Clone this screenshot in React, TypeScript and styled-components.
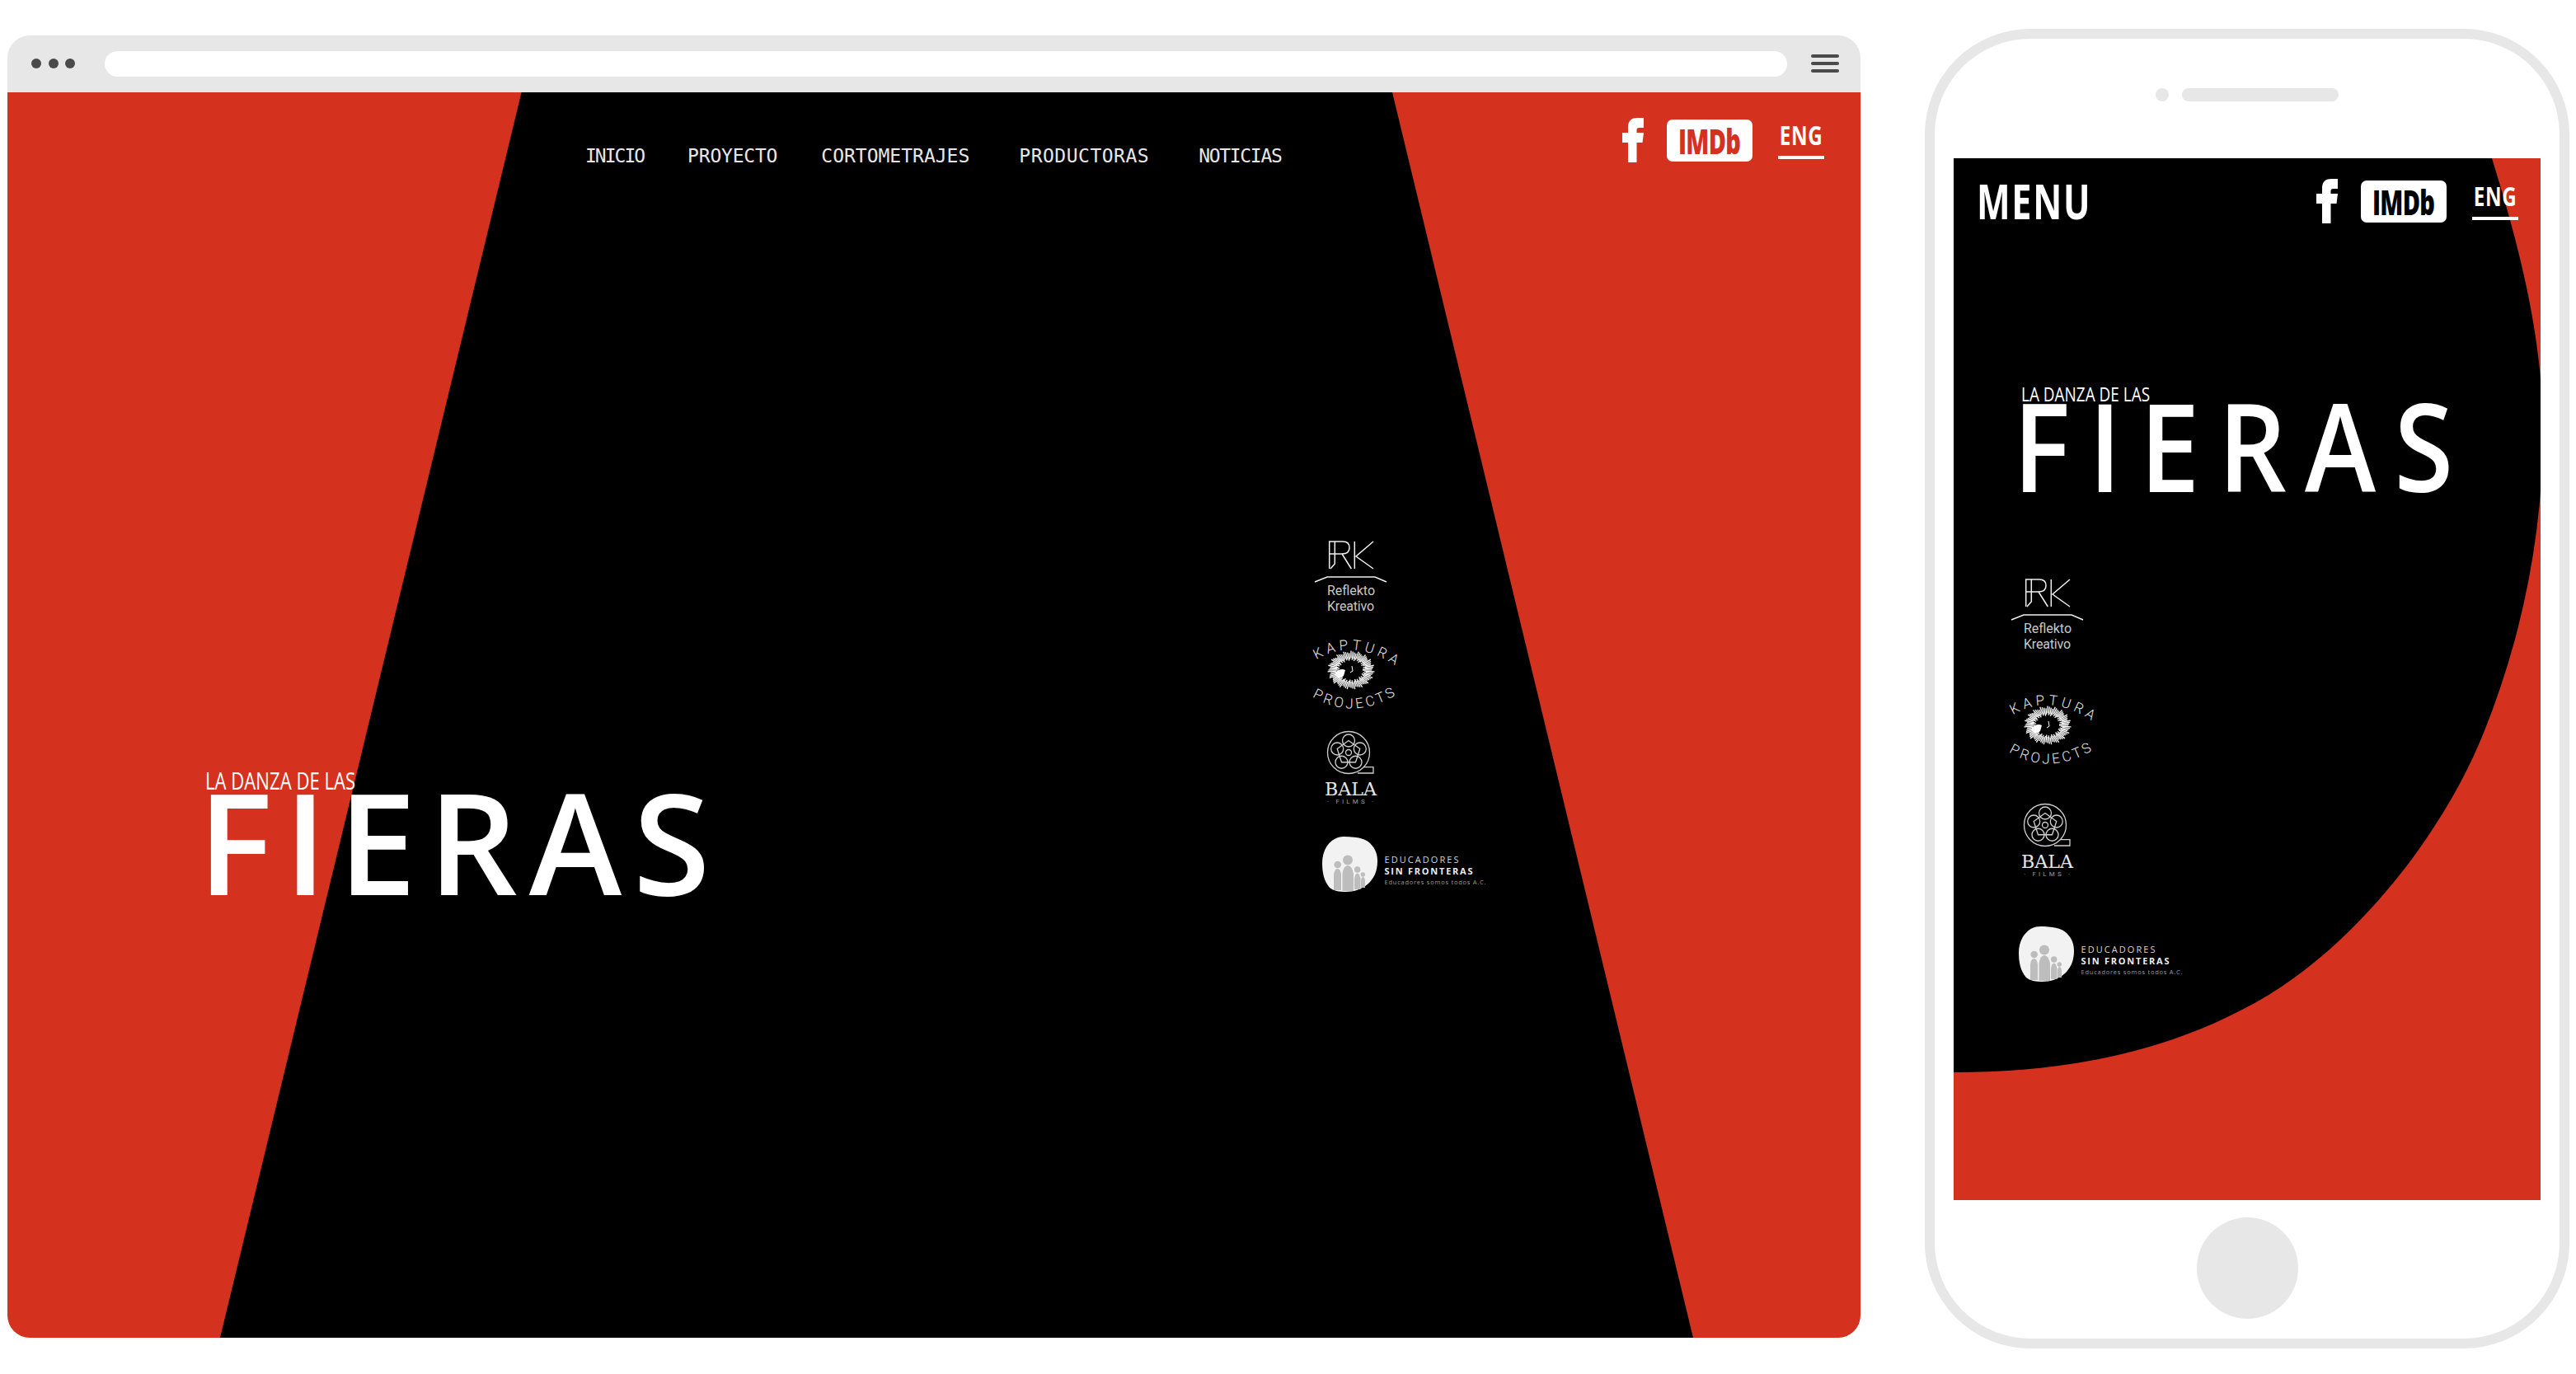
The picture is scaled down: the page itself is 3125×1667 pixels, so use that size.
import React from 'react';
import styled, { createGlobalStyle } from 'styled-components';

const RED = '#d4321f';
const CHROME = '#e7e7e7';
const DARK = '#4a4a4a';
const SANS = '"Open Sans", "Noto Sans", sans-serif';

const Global = createGlobalStyle`
  html, body { margin: 0; padding: 0; background: #fff; }
  body { width: 3125px; height: 1667px; overflow: hidden; font-family: ${SANS}; }
`;

const Stage = styled.div`
  display: flex;
  align-items: flex-start;
  gap: 78px;
  padding: 35px 0 0 9px;
`;

const BrowserFrame = styled.section`
  width: 2248px;
  height: 1580px;
  margin-top: 8px;
  border-radius: 27px;
  overflow: hidden;
  display: flex;
  flex-direction: column;
  flex: none;
`;

const Toolbar = styled.header`
  height: 69px;
  flex: none;
  background: ${CHROME};
  display: flex;
  align-items: center;
  padding: 0 26px 1px 29px;
  box-sizing: border-box;
`;

const Dots = styled.div`
  display: flex;
  gap: 8.5px;
  margin-right: 36px;
`;

const Dot = styled.span`
  width: 12px;
  height: 12px;
  border-radius: 50%;
  background: ${DARK};
`;

const UrlBar = styled.div`
  flex: 1;
  height: 31px;
  border-radius: 16px;
  background: #fff;
`;

const Burger = styled.div`
  width: 34px;
  margin-left: 29px;
  display: flex;
  flex-direction: column;
  gap: 5px;
`;

const BurgerLine = styled.span`
  height: 4px;
  border-radius: 2px;
  background: ${DARK};
`;

const Hero = styled.main`
  flex: 1;
  position: relative;
  background: ${RED};
  display: flex;
  flex-direction: column;
  &::before {
    content: '';
    position: absolute;
    inset: 0;
    background: #000;
    clip-path: polygon(623.6px 0, 1680px 0, 2045px 100%, 258px 100%);
  }
`;

const TopBar = styled.div`
  position: relative;
  height: 90px;
  display: flex;
  align-items: flex-start;
  padding: 31px 44px 0 701px;
  box-sizing: border-box;
`;

const Nav = styled.nav`
  display: flex;
  gap: 53px;
  margin-top: 34px;
`;

const NavLink = styled.a<{ $track: number }>`
  font-family: "DejaVu Sans Mono", monospace;
  font-size: 23px;
  line-height: 24px;
  letter-spacing: ${(p) => p.$track}px;
  color: #e6e6e6;
  white-space: nowrap;
  &:nth-child(n + 4) { margin-left: 7px; }
`;

const Socials = styled.div`
  display: flex;
  align-items: flex-start;
  margin-left: auto;
`;

const FacebookMark = styled.svg`
  width: 26px;
  height: 54px;
  display: block;
  flex: none;
  fill: #fff;
`;

const ImdbBadge = styled.div`
  width: 104px;
  height: 51px;
  margin: 2px 31px 0 28px;
  border-radius: 7px;
  background: #fff;
  display: flex;
  align-items: center;
  justify-content: center;
  flex: none;
`;

const ImdbText = styled.span<{ $ink: string }>`
  font-family: ${SANS};
  font-weight: 800;
  font-size: 42px;
  line-height: 42px;
  letter-spacing: -1px;
  color: ${(p) => p.$ink};
  transform: scaleX(0.69);
  white-space: nowrap;
`;

const EngLink = styled.div`
  width: 56px;
  margin-top: 9px;
  padding-bottom: 13px;
  border-bottom: 4px solid #fff;
  display: flex;
  justify-content: center;
  flex: none;
`;

const EngText = styled.span`
  font-family: ${SANS};
  font-weight: 700;
  font-size: 33px;
  line-height: 24px;
  letter-spacing: 1px;
  color: #fff;
  transform: scaleX(0.73);
  white-space: nowrap;
`;

const HeroMain = styled.div`
  position: relative;
  display: flex;
  align-items: flex-end;
  padding: 448px 0 0 240px;
`;

const TitleBlock = styled.div<{ $width: number; $shift: number; $gap: number; $lift: number }>`
  width: ${(p) => p.$width}px;
  flex: none;
  margin-left: ${(p) => p.$shift}px;
  margin-bottom: ${(p) => p.$lift}px;
  display: flex;
  flex-direction: column;
  gap: ${(p) => p.$gap}px;
  color: #fff;
  white-space: nowrap;
`;

const Kicker = styled.div<{ $size: number; $sx: number; $indent: number }>`
  font-family: ${SANS};
  font-weight: 500;
  font-size: ${(p) => p.$size}px;
  line-height: 0.72em;
  margin-left: ${(p) => p.$indent}px;
  transform: scaleX(${(p) => p.$sx});
  transform-origin: left center;
`;

const Wordmark = styled.div<{ $size: number; $sx: number; $track: number }>`
  font-family: ${SANS};
  font-weight: 600;
  font-size: ${(p) => p.$size}px;
  line-height: 0.72em;
  letter-spacing: ${(p) => p.$track}em;
  transform: scaleX(${(p) => p.$sx});
  transform-origin: left center;
`;

const LogoColumn = styled.div<{ $gap: number }>`
  display: flex;
  flex-direction: column;
  align-items: flex-start;
  gap: ${(p) => p.$gap}px;
  flex: none;
`;

const LogoSvg = styled.svg`
  display: block;
  overflow: visible;
  flex: none;
`;

const PhoneFrame = styled.section`
  width: 782px;
  height: 1601px;
  flex: none;
  box-sizing: border-box;
  border: 12px solid ${CHROME};
  border-radius: 128px;
  display: flex;
  flex-direction: column;
  align-items: center;
  padding-top: 60px;
`;

const Earpiece = styled.div`
  display: flex;
  align-items: center;
  gap: 16px;
  height: 16px;
  flex: none;
`;

const Camera = styled.span`
  width: 16px;
  height: 16px;
  border-radius: 50%;
  background: ${CHROME};
`;

const Speaker = styled.span`
  width: 190px;
  height: 16px;
  border-radius: 8px;
  background: ${CHROME};
`;

const PhoneScreen = styled.main`
  position: relative;
  width: 712px;
  height: 1264px;
  margin-top: 69px;
  flex: none;
  background: ${RED};
  &::before {
    content: '';
    position: absolute;
    inset: 0;
    background: #000;
    clip-path: path('M0 0H653C687 110 715 220 715 330C715 450 692 575 643 697C593 822 484 959 367 1024C241 1094 110 1109 0 1109Z');
  }
`;

const PhoneHeader = styled.div`
  position: relative;
  height: 90px;
  display: flex;
  align-items: flex-start;
  padding: 25px 27px 0 28px;
  box-sizing: border-box;
`;

const MenuLabel = styled.div`
  font-family: ${SANS};
  font-weight: 700;
  font-size: 59px;
  line-height: 42px;
  margin-top: 5px;
  letter-spacing: 0.04em;
  color: #fff;
  transform: scaleX(0.73);
  transform-origin: left center;
`;

const PhoneMain = styled.div`
  position: relative;
  display: flex;
  flex-direction: column;
  padding: 187px 0 0 65px;
`;

const HomeButton = styled.div`
  width: 123px;
  height: 123px;
  margin-top: 21px;
  border-radius: 50%;
  background: ${CHROME};
  flex: none;
`;

const F_PATH =
  'M7 54V30H0V18H7V11C7 3 12 0 18 0H26V12H21C18 12 17.5 13 17.5 15V18H26L24.5 30H17.5V54Z';

const SocialRow: React.FC<{ ink: string }> = ({ ink }) => (
  <Socials>
    <FacebookMark viewBox="0 0 26 54">
      <path d={F_PATH} />
    </FacebookMark>
    <ImdbBadge>
      <ImdbText $ink={ink}>IMDb</ImdbText>
    </ImdbBadge>
    <EngLink>
      <EngText>ENG</EngText>
    </EngLink>
  </Socials>
);

const RkLogo = () => (
  <LogoSvg width="215" height="110" viewBox="0 0 215 110">
    <g fill="none" stroke="#f0f0f0" strokeWidth="1.5">
      <path d="M22.7 40V7H39Q47 7 47 14.5Q47 22 38 22H23" />
      <path d="M29.3 7V34L24 40" />
      <path d="M38 22L49.3 40" />
      <path d="M53.3 40V7" />
      <path d="M76 7L55 25L76 40" />
      <path d="M5 56L20 50H78L92 56" />
    </g>
    <g fill="#c8c8c8" fontFamily="Roboto, sans-serif" fontSize="16">
      <text x="20" y="72" textLength="58">Reflekto</text>
      <text x="20" y="91" textLength="57">Kreativo</text>
    </g>
  </LogoSvg>
);

const spokes = Array.from({ length: 76 }, (_, i) => {
  const a = (i / 76) * Math.PI * 2;
  const inner = 0.5 + ((i * 7) % 5) * 0.035;
  const outer = 0.9 + ((i * 11) % 4) * 0.04;
  return {
    x1: 49 + Math.cos(a) * 28 * inner,
    y1: 53 + Math.sin(a) * 23 * inner,
    x2: 49 + Math.cos(a) * 28 * outer,
    y2: 53 + Math.sin(a) * 23 * outer,
  };
});

const KapturaLogo: React.FC<{ uid: string }> = ({ uid }) => (
  <LogoSvg width="215" height="118" viewBox="0 0 215 118">
    <defs>
      <path id={`${uid}-top`} d="M2 44Q50 10 106 50" />
      <path id={`${uid}-bot`} d="M0 84Q50 116 106 82" />
    </defs>
    <g fill="#e4e4e4" fontFamily="Roboto, sans-serif" fontWeight="300" fontSize="17">
      <text letterSpacing="4.5">
        <textPath href={`#${uid}-top`} startOffset="6">KAPTURA</textPath>
      </text>
      <text letterSpacing="3.5">
        <textPath href={`#${uid}-bot`} startOffset="2">PROJECTS</textPath>
      </text>
    </g>
    <g stroke="#fff" strokeWidth="1.3">
      {spokes.map((s, i) => (
        <line key={i} x1={s.x1} y1={s.y1} x2={s.x2} y2={s.y2} />
      ))}
    </g>
    <path d="M30 56Q36 50 42 53L40 60Q35 65 30 60Z" fill="#fff" />
    <path d="M50 48L51 54L48 56" fill="none" stroke="#fff" strokeWidth="1" />
  </LogoSvg>
);

const reel = [0, 1, 2, 3, 4].map((i) => {
  const a = -Math.PI / 2 + (i * 2 * Math.PI) / 5;
  return { x: 46 + Math.cos(a) * 14.5, y: 35 + Math.sin(a) * 14.5 };
});

const BalaLogo = () => (
  <LogoSvg width="215" height="126" viewBox="0 0 215 126">
    <g fill="none" stroke="#cfcfcf" strokeWidth="1.3">
      <circle cx="46" cy="35" r="25.5" />
      <circle cx="46" cy="35" r="3.5" />
      {reel.map((c, i) => (
        <circle key={i} cx={c.x} cy={c.y} r="7.5" />
      ))}
      <polygon points={reel.map((c) => `${c.x},${c.y}`).join(' ')} />
      <path d="M57 60H76V52.7H64" />
    </g>
    <text x="17" y="87" fill="#e6e6e6" fontFamily='"DejaVu Serif", serif' fontSize="23" textLength="63" lengthAdjust="spacingAndGlyphs">BALA</text>
    <text x="20" y="97" fill="#9a9a9a" fontFamily="Roboto, sans-serif" fontSize="8" textLength="56">· FILMS ·</text>
  </LogoSvg>
);

const EducadoresLogo = () => (
  <LogoSvg width="215" height="82" viewBox="0 0 215 82">
    <path d="M14 43C14 24 26 11 40 11C54 11 66 13 72 19C79 26 81 33 81 41C81 54 76 62 70 68C62 75 52 78 43 78C34 78 28 77 23 73C16 65 14 54 14 43Z" fill="#f2f2f2" />
    <g fill="#bdbdbd">
      <circle cx="32.7" cy="45" r="4.3" />
      <path d="M28 76V57Q29 50 32.7 50Q36 50 37 57V76Z" />
      <circle cx="45" cy="39.5" r="6" />
      <path d="M38.5 77V56Q40 46 45 46Q50 46 52 56V77Z" />
      <circle cx="56.7" cy="51" r="3.7" />
      <path d="M53 75V62Q54 55.5 56.7 55.5Q59 55.5 60.5 62V75Z" />
      <circle cx="63.3" cy="57" r="2.7" />
      <path d="M61 73V64Q62 60 63.3 60Q65 60 66 64V73Z" />
    </g>
    <g fontFamily='"Open Sans", sans-serif'>
      <text x="89.5" y="43" fill="#d4d4d4" fontSize="11" textLength="90">EDUCADORES</text>
      <text x="89.5" y="56.7" fill="#ededed" fontSize="11" fontWeight="700" textLength="107">SIN FRONTERAS</text>
      <text x="89.5" y="68.5" fill="#9c9c9c" fontSize="7.5" textLength="123">Educadores somos todos A.C.</text>
    </g>
  </LogoSvg>
);

const Logos: React.FC<{ uid: string; gap: number }> = ({ uid, gap }) => (
  <LogoColumn $gap={gap}>
    <RkLogo />
    <KapturaLogo uid={uid} />
    <BalaLogo />
    <EducadoresLogo />
  </LogoColumn>
);

export default function App() {
  return (
    <>
      <Global />
      <Stage>
        <BrowserFrame>
          <Toolbar>
            <Dots>
              <Dot />
              <Dot />
              <Dot />
            </Dots>
            <UrlBar />
            <Burger>
              <BurgerLine />
              <BurgerLine />
              <BurgerLine />
            </Burger>
          </Toolbar>
          <Hero>
            <TopBar>
              <Nav>
                <NavLink $track={-2}>INICIO</NavLink>
                <NavLink $track={-0.2}>PROYECTO</NavLink>
                <NavLink $track={0}>CORTOMETRAJES</NavLink>
                <NavLink $track={0.5}>PRODUCTORAS</NavLink>
                <NavLink $track={-1.3}>NOTICIAS</NavLink>
              </Nav>
              <SocialRow ink={RED} />
            </TopBar>
            <HeroMain>
              <TitleBlock $width={1350} $shift={-9} $gap={1} $lift={5}>
                <Kicker $size={29.5} $sx={0.75} $indent={9}>LA DANZA DE LAS</Kicker>
                <Wordmark $size={170} $sx={1} $track={0.082}>FIERAS</Wordmark>
              </TitleBlock>
              <Logos uid="desk" gap={0} />
            </HeroMain>
          </Hero>
        </BrowserFrame>
        <PhoneFrame>
          <Earpiece>
            <Camera />
            <Speaker />
          </Earpiece>
          <PhoneScreen>
            <PhoneHeader>
              <MenuLabel>MENU</MenuLabel>
              <SocialRow ink="#000" />
            </PhoneHeader>
            <PhoneMain>
              <TitleBlock $width={600} $shift={7} $gap={1} $lift={102}>
                <Kicker $size={24} $sx={0.79} $indent={10}>LA DANZA DE LAS</Kicker>
                <Wordmark $size={148} $sx={0.88} $track={0.171}>FIERAS</Wordmark>
              </TitleBlock>
              <Logos uid="mob" gap={21} />
            </PhoneMain>
          </PhoneScreen>
          <HomeButton />
        </PhoneFrame>
      </Stage>
    </>
  );
}
